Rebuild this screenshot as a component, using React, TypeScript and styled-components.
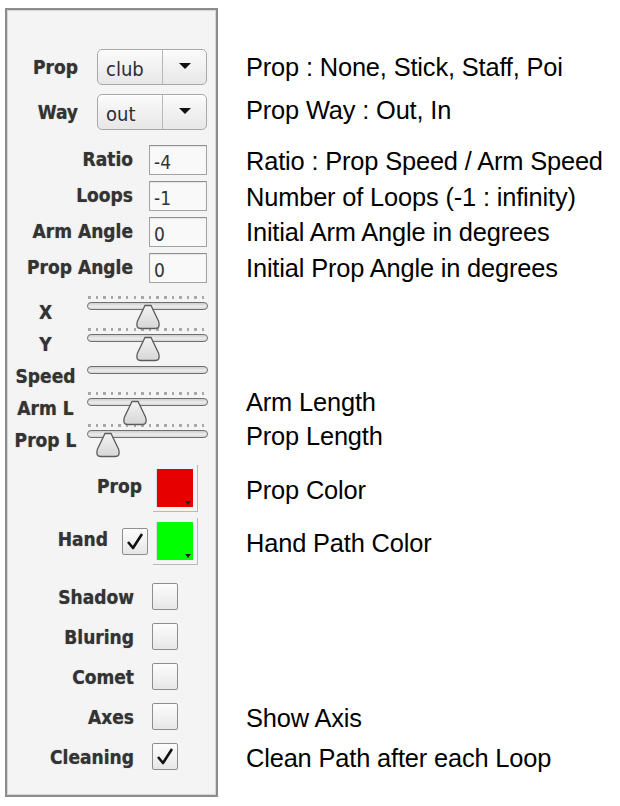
import React from "react";
import styled, { createGlobalStyle } from "styled-components";

const GlobalStyle = createGlobalStyle`
  html, body {
    margin: 0;
    padding: 0;
    background: #ffffff;
  }
`;

const LABEL_FONT = `"DejaVu Sans Condensed", "DejaVu Sans", sans-serif`;

const Page = styled.div`
  display: flex;
  align-items: flex-start;
  padding: 8px 0 0 5px;
  width: 620px;
  height: 806px;
  box-sizing: border-box;
`;

const Panel = styled.div`
  width: 213px;
  height: 789px;
  box-sizing: border-box;
  border: 2px solid #8c8c8c;
  box-shadow: inset 0 0 0 1px #d6d6d6;
  background: #f4f4f4;
  padding-top: 36px;
  display: flex;
  flex-direction: column;
`;

const Notes = styled.div`
  margin-left: 28px;
  padding-top: 38px;
  display: flex;
  flex-direction: column;
  font-family: "Liberation Sans", Arial, sans-serif;
  font-size: 25.4px;
  color: #000;
  letter-spacing: -0.15px;
`;

const Gap = styled.div<{ $h: number }>`
  height: ${(p) => p.$h}px;
  flex-shrink: 0;
`;

const NoteRow = styled.div<{ $h: number; $dy?: number }>`
  height: ${(p) => p.$h}px;
  display: flex;
  align-items: center;
  white-space: nowrap;
  padding-top: ${(p) => Math.max(0, p.$dy ?? 0) * 2}px;
  padding-bottom: ${(p) => Math.max(0, -(p.$dy ?? 0)) * 2}px;
  box-sizing: border-box;
  flex-shrink: 0;
`;

const FieldRow = styled.div<{ $h: number; $pr: number }>`
  height: ${(p) => p.$h}px;
  display: flex;
  align-items: center;
  justify-content: flex-end;
  padding-right: ${(p) => p.$pr}px;
  flex-shrink: 0;
`;

const Label = styled.span<{ $mr: number; $dy?: number }>`
  font-family: ${LABEL_FONT};
  font-stretch: condensed;
  font-weight: bold;
  font-size: 19px;
  color: #333;
  text-shadow: 0 0 1px rgba(40, 40, 40, 0.5);
  margin-right: ${(p) => p.$mr}px;
  position: relative;
  top: ${(p) => p.$dy ?? 0}px;
  white-space: nowrap;
`;

const Combo = styled.div`
  width: 110px;
  height: 36px;
  box-sizing: border-box;
  border: 1px solid #a8a8a8;
  border-radius: 5px;
  background: linear-gradient(#fbfbfb, #e7e7e7);
  box-shadow: inset 0 1px 0 #ffffff;
  display: flex;
`;

const ComboValue = styled.div`
  width: 65px;
  border-right: 1px solid #b8b8b8;
  display: flex;
  align-items: center;
  padding: 4px 0 0 8px;
  box-sizing: border-box;
  font-family: ${LABEL_FONT};
  font-stretch: condensed;
  font-size: 20px;
  color: #2c2c38;
`;

const ComboArrow = styled.div`
  flex: 1;
  display: flex;
  align-items: center;
  justify-content: center;
  &::after {
    content: "";
    border-left: 6px solid transparent;
    border-right: 6px solid transparent;
    border-top: 6px solid #111;
    margin-top: -2px;
  }
`;

const TextBox = styled.div`
  width: 58px;
  height: 30px;
  box-sizing: border-box;
  border: 1px solid #a3a3a3;
  border-top-color: #8f8f8f;
  background: #f9f9f9;
  box-shadow: inset 0 1px 1px rgba(0, 0, 0, 0.08);
  display: flex;
  align-items: center;
  padding: 4px 0 0 4px;
  font-family: ${LABEL_FONT};
  font-stretch: condensed;
  font-size: 19px;
  color: #333;
`;

const SliderRow = styled.div`
  height: 32px;
  display: grid;
  grid-template-columns: 77px 121px;
  column-gap: 3px;
  flex-shrink: 0;
`;

const SliderLabel = styled.span`
  font-family: ${LABEL_FONT};
  font-stretch: condensed;
  font-weight: bold;
  font-size: 19px;
  color: #333;
  text-shadow: 0 0 1px rgba(40, 40, 40, 0.5);
  text-align: center;
  padding-top: 9px;
  white-space: nowrap;
`;

const SliderBody = styled.div`
  position: relative;
`;

const Dots = styled.div`
  position: absolute;
  left: 1px;
  right: 0;
  top: 4px;
  height: 3px;
  background: repeating-linear-gradient(to right, #a9a9a9 0 2.5px, transparent 2.5px 7.6px);
`;

const Track = styled.div`
  position: absolute;
  left: 0;
  right: 0;
  top: 10px;
  height: 8px;
  box-sizing: border-box;
  border: 1.5px solid #6f6f6f;
  border-radius: 4px;
  background: linear-gradient(#cfcfcf, #ececec 60%, #d4d4d4);
`;

const Thumb = styled.svg`
  position: absolute;
  top: 13px;
  width: 28px;
  height: 25px;
  margin-left: -14px;
  z-index: 2;
  overflow: visible;
`;

const Swatch = styled.div<{ $color: string }>`
  width: 45px;
  height: 47px;
  box-sizing: border-box;
  border-right: 1.5px solid #b9b9b9;
  border-bottom: 1.5px solid #b9b9b9;
  padding: 4px 4px 4px 3px;
  display: flex;
  position: relative;
  &::before {
    content: "";
    flex: 1;
    background: ${(p) => p.$color};
    border-left: 1px solid #dcdcdc;
  }
  &::after {
    content: "";
    position: absolute;
    right: 6px;
    bottom: 6px;
    border-left: 3.5px solid transparent;
    border-right: 3.5px solid transparent;
    border-top: 4px solid #222;
  }
`;

const Check = styled.div<{ $mr?: number }>`
  width: 26px;
  height: 27px;
  box-sizing: border-box;
  border: 1px solid #8e8e8e;
  border-radius: 2px;
  background: linear-gradient(#fdfdfd, #e6e6e6);
  display: flex;
  align-items: center;
  justify-content: center;
  margin-right: ${(p) => p.$mr ?? 0}px;
`;

const CheckMark: React.FC = () => (
  <svg width="20" height="20" viewBox="0 0 20 20">
    <path d="M3 11 L8 17 L17 3" fill="none" stroke="#111" strokeWidth="2.6" strokeLinejoin="round" />
  </svg>
);

type CheckBoxProps = { checked?: boolean; mr?: number };

const CheckBox: React.FC<CheckBoxProps> = ({ checked, mr }) => (
  <Check $mr={mr}>{checked && <CheckMark />}</Check>
);

type SliderProps = { label: string; value?: number; dots?: boolean };

const Slider: React.FC<SliderProps> = ({ label, value, dots = true }) => (
  <SliderRow>
    <SliderLabel>{label}</SliderLabel>
    <SliderBody>
      {dots && <Dots />}
      <Track />
      {value !== undefined && (
        <Thumb viewBox="0 0 28 25" style={{ left: `${value * 100}%` }}>
          <defs>
            <linearGradient id="thumbFill" x1="0" y1="0" x2="0" y2="1">
              <stop offset="0" stopColor="#f4f4f4" />
              <stop offset="1" stopColor="#d6d6d6" />
            </linearGradient>
          </defs>
          <path
            d="M11 0.5 L17 0.5 L24.5 16 Q27 23.5 21 23.5 L7 23.5 Q1 23.5 3.5 16 Z"
            fill="url(#thumbFill)"
            stroke="#5c5c5c"
            strokeWidth="1.3"
          />
        </Thumb>
      )}
    </SliderBody>
  </SliderRow>
);

const checks = [
  { label: "Shadow", checked: false },
  { label: "Bluring", checked: false },
  { label: "Comet", checked: false },
  { label: "Axes", checked: false },
  { label: "Cleaning", checked: true },
];

const fields = [
  { label: "Ratio", value: "-4" },
  { label: "Loops", value: "-1" },
  { label: "Arm Angle", value: "0" },
  { label: "Prop Angle", value: "0" },
];

export default function App() {
  return (
    <>
      <GlobalStyle />
      <Page>
        <Panel>
          <FieldRow $h={42} $pr={9}>
            <Label $mr={19}>Prop</Label>
            <Combo>
              <ComboValue>club</ComboValue>
              <ComboArrow />
            </Combo>
          </FieldRow>
          <FieldRow $h={48} $pr={9}>
            <Label $mr={19}>Way</Label>
            <Combo>
              <ComboValue>out</ComboValue>
              <ComboArrow />
            </Combo>
          </FieldRow>
          <Gap $h={6} />
          {fields.map((f) => (
            <FieldRow key={f.label} $h={36} $pr={9}>
              <Label $mr={16} $dy={-1}>{f.label}</Label>
              <TextBox>{f.value}</TextBox>
            </FieldRow>
          ))}
          <Gap $h={6} />
          <Slider label="X" value={0.5} />
          <Slider label="Y" value={0.5} />
          <Slider label="Speed" dots={false} />
          <Slider label="Arm L" value={0.4} />
          <Slider label="Prop L" value={0.17} />
          <Gap $h={11} />
          <FieldRow $h={50} $pr={18}>
            <Label $mr={11} $dy={-2}>Prop</Label>
            <Swatch $color="#e60000" />
          </FieldRow>
          <Gap $h={3} />
          <FieldRow $h={50} $pr={18}>
            <Label $mr={14} $dy={-2}>Hand</Label>
            <CheckBox checked mr={5} />
            <Swatch $color="#00ff00" />
          </FieldRow>
          <Gap $h={10} />
          {checks.map((c) => (
            <FieldRow key={c.label} $h={40} $pr={38}>
              <Label $mr={18} $dy={1}>{c.label}</Label>
              <CheckBox checked={c.checked} />
            </FieldRow>
          ))}
        </Panel>
        <Notes>
          <NoteRow $h={42}>Prop : None, Stick, Staff, Poi</NoteRow>
          <NoteRow $h={48} $dy={-2}>Prop Way : Out, In</NoteRow>
          <Gap $h={6} />
          <NoteRow $h={36} $dy={1}>Ratio : Prop Speed / Arm Speed</NoteRow>
          <NoteRow $h={36} $dy={1}>Number of Loops (-1 : infinity)</NoteRow>
          <NoteRow $h={36}>Initial Arm Angle in degrees</NoteRow>
          <NoteRow $h={36}>Initial Prop Angle in degrees</NoteRow>
          <Gap $h={6} />
          <Gap $h={96} />
          <NoteRow $h={32} $dy={-2}>Arm Length</NoteRow>
          <NoteRow $h={32}>Prop Length</NoteRow>
          <Gap $h={11} />
          <NoteRow $h={50} $dy={2}>Prop Color</NoteRow>
          <Gap $h={3} />
          <NoteRow $h={50} $dy={2}>Hand Path Color</NoteRow>
          <Gap $h={10} />
          <Gap $h={120} />
          <NoteRow $h={40} $dy={2}>Show Axis</NoteRow>
          <NoteRow $h={40} $dy={2}>Clean Path after each Loop</NoteRow>
        </Notes>
      </Page>
    </>
  );
}
